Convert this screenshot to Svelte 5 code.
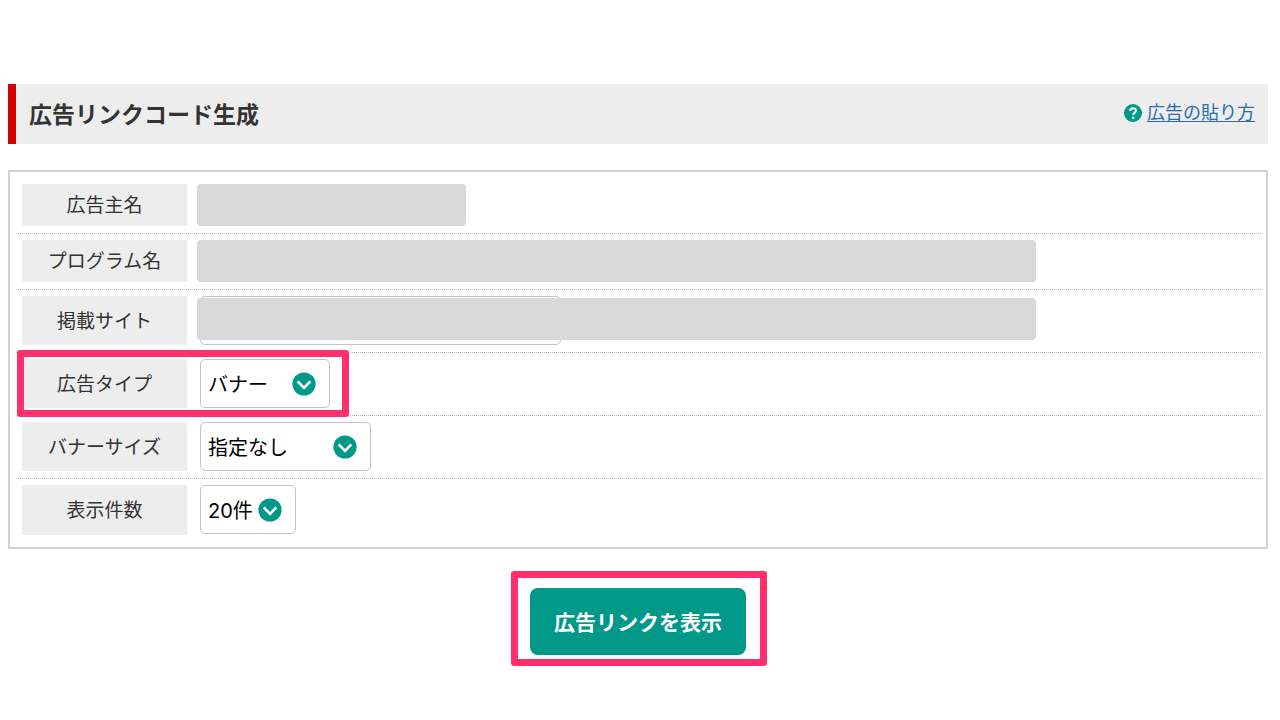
<script>
  let site = "";
  let type = "banner";
  let size = "none";
  let count = "20";
</script>

{#snippet arrow()}
  <svg class="arrow" viewBox="0 0 24 24" aria-hidden="true">
    <circle cx="12" cy="12" r="11.6" fill="#009888" />
    <path d="M5.7 9.4 L12 15.9 L18.3 9.4" fill="none" stroke="#fff" stroke-width="2.7" />
  </svg>
{/snippet}

<main>
  <header>
    <h1>広告リンクコード生成</h1>
    <div class="help">
      <svg viewBox="0 0 18 18" aria-hidden="true">
        <circle cx="9" cy="9" r="9" fill="#009888" />
        <path
          d="M6.2 7 C6.3 5.2 7.4 4.3 9.1 4.3 C10.9 4.3 12 5.2 12 6.7 C12 8.6 9.2 8.6 9.2 10.9"
          fill="none"
          stroke="#fff"
          stroke-width="2"
        />
        <circle cx="9.2" cy="13.7" r="1.3" fill="#fff" />
      </svg>
      <a href="#help">広告の貼り方</a>
    </div>
  </header>

  <form on:submit|preventDefault>
    <div class="panel">
      <div class="row short">
        <span class="name">広告主名</span>
        <span class="mask small"></span>
      </div>
      <div class="row short">
        <span class="name">プログラム名</span>
        <span class="mask"></span>
      </div>
      <div class="row">
        <label class="name" for="site">掲載サイト</label>
        <div class="field site">
          <select id="site" bind:value={site}>
            <option value=""></option>
          </select>
        </div>
        <span class="mask over"></span>
      </div>
      <div class="row">
        <label class="name" for="type">広告タイプ</label>
        <div class="field type">
          <select id="type" bind:value={type}>
            <option value="banner">バナー</option>
          </select>
          {@render arrow()}
        </div>
        <div class="marker"></div>
      </div>
      <div class="row">
        <label class="name" for="size">バナーサイズ</label>
        <div class="field size">
          <select id="size" bind:value={size}>
            <option value="none">指定なし</option>
          </select>
          {@render arrow()}
        </div>
      </div>
      <div class="row">
        <label class="name" for="count">表示件数</label>
        <div class="field count">
          <select id="count" bind:value={count}>
            <option value="20">20件</option>
          </select>
          {@render arrow()}
        </div>
      </div>
    </div>

    <div class="actions">
      <div class="frame">
        <button type="submit">広告リンクを表示</button>
      </div>
    </div>
  </form>
</main>

<style>
  :global(body) {
    margin: 0;
    background: #fff;
  }
  main {
    padding: 84px 12px 24px 8px;
    color: #333;
    font-family: "Noto Sans CJK JP", sans-serif;
  }
  main * {
    box-sizing: border-box;
  }
  header {
    display: flex;
    justify-content: space-between;
    align-items: center;
    height: 60px;
    padding: 0 13px 2px;
    border-left: 8px solid #d20000;
    background: #ededed;
  }
  h1 {
    margin: 0;
    font-size: 23px;
    line-height: 32px;
    font-weight: bold;
  }
  .help {
    display: flex;
    align-items: center;
    gap: 5px;
    font-size: 18px;
    line-height: 28px;
  }
  .help svg {
    width: 18px;
    height: 18px;
  }
  .help a {
    padding-bottom: 4px;
    color: #2a6cb0;
    text-underline-offset: 2px;
  }
  .panel {
    margin-top: 26px;
    padding: 6px 5px 5px 6px;
    border: 2px solid #d2d2d2;
  }
  .row {
    position: relative;
    display: flex;
    min-height: 63px;
    padding: 6px 6px 7px;
    border-bottom: 1px dotted #b4b4b4;
  }
  .row.short {
    min-height: 56px;
  }
  .row:last-child {
    border-bottom: 0;
  }
  .name {
    display: flex;
    flex: none;
    align-items: center;
    justify-content: center;
    width: 165px;
    padding-bottom: 2px;
    background: #ededed;
    font-size: 19px;
    line-height: 28px;
  }
  .mask {
    width: 100%;
    max-width: 839px;
    margin-left: 10px;
    border-radius: 4px;
    background: #d8d8d8;
  }
  .mask.small {
    max-width: 269px;
  }
  .mask.over {
    position: absolute;
    top: 8px;
    left: 181px;
    height: 42px;
    margin: 0;
  }
  .field {
    position: relative;
    margin-left: 13px;
  }
  .field.site {
    width: 361px;
  }
  .field.type {
    width: 130px;
  }
  .field.size {
    width: 171px;
  }
  .field.count {
    width: 96px;
  }
  select {
    appearance: none;
    display: block;
    width: 100%;
    height: 49px;
    margin: 0;
    padding: 2px 7px 0;
    border: 1px solid #c4c4c4;
    border-radius: 5px;
    background: #fff;
    color: #000;
    font-family: Inter, "Noto Sans CJK JP", sans-serif;
    font-size: 20px;
  }
  .arrow {
    position: absolute;
    top: 13px;
    right: 14px;
    width: 24px;
    height: 24px;
    pointer-events: none;
  }
  .marker {
    position: absolute;
    top: -3px;
    left: 1px;
    width: 332px;
    height: 67px;
    border: 7px solid #ff306c;
    border-radius: 3px;
    pointer-events: none;
  }
  .actions {
    display: flex;
    justify-content: center;
    margin-top: 22px;
    padding-left: 2px;
  }
  .frame {
    padding: 10px 14px 4px 12px;
    border: 7px solid #ff306c;
    border-radius: 3px;
  }
  button {
    display: block;
    width: 216px;
    height: 67px;
    padding: 0 0 2px;
    border: 0;
    border-radius: 8px;
    background: #009888;
    color: #fff;
    font-family: inherit;
    font-size: 21px;
    font-weight: bold;
    white-space: nowrap;
  }
</style>
